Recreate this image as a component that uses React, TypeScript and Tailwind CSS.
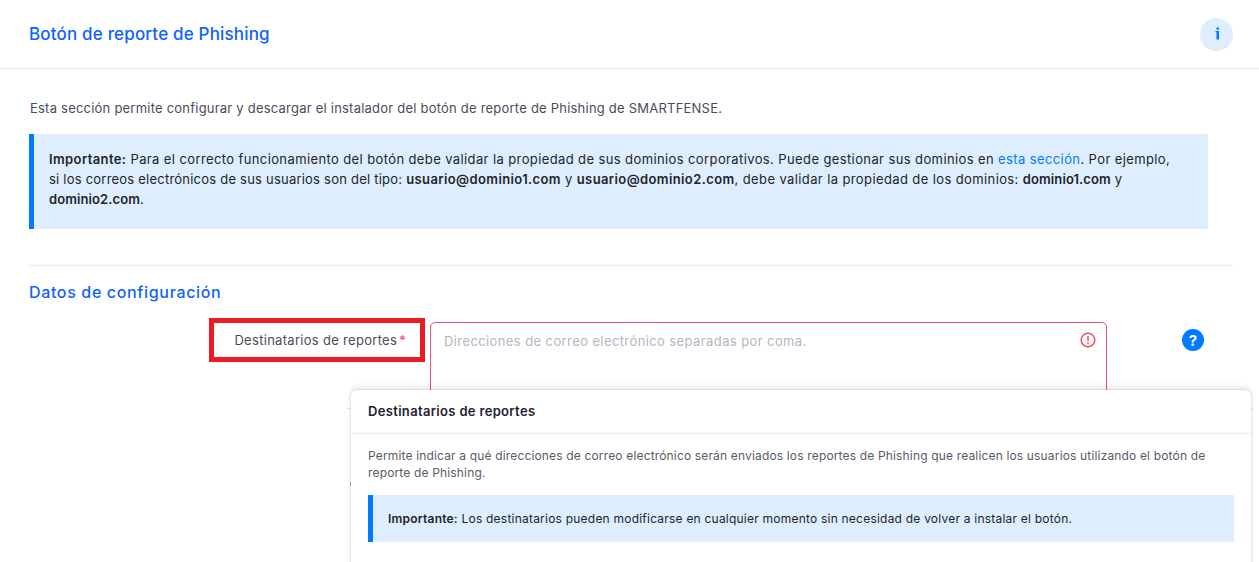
const font = { fontFamily: 'Inter, "Noto Sans", sans-serif' };

function Note({ className, children }: { className: string; children: React.ReactNode }) {
  return <div className={`bg-[#deeefe] border-l-[5px] border-[#007bff] text-[#212529] ${className}`}>{children}</div>;
}

export default function App() {
  return (
    <div className="relative h-[562px] w-[1259px] overflow-hidden bg-white text-[13px] text-[#4b4b5a]" style={font}>
      {/* Header */}
      <div className="flex h-[69px] items-center justify-between border-b border-[#ebebf3] pl-[29px] pr-[26px]">
        <h1 className="pt-[1px] text-[17px] font-medium tracking-[0.17px] text-[#0f62fe]">Botón de reporte de Phishing</h1>
        <div className="flex h-[33px] w-[33px] items-center justify-center rounded-full bg-[#deeefe]">
          <svg width="10" height="14" viewBox="0 0 10 14" fill="#007bff">
            <rect x="4.5" y="0.5" width="2.5" height="2.2" />
            <path d="M3.5 4h3.5v8.5h-2.5V5.2h-1z" />
          </svg>
        </div>
      </div>

      <div className="pl-[29px] pr-[26px]">
        <p className="mt-[30px] pl-[1px] leading-[18px] tracking-[0.22px]">
          Esta sección permite configurar y descargar el instalador del botón de reporte de Phishing de SMARTFENSE.
        </p>

        <Note className="mt-[17px] h-[95px] w-[1179px] pl-[15px] pt-[15px] leading-[20px] tracking-[0.39px]">
          <b className="font-semibold">Importante:</b> Para el correcto funcionamiento del botón debe validar la propiedad de sus dominios corporativos. Puede gestionar sus dominios en{' '}
          <span className="text-[#007bff]">esta sección</span>. Por ejemplo,<br />
          <span className="tracking-[0.22px]">si los correos electrónicos de sus usuarios son del tipo:</span> <b className="font-semibold">usuario@dominio1.com</b> y{' '}
          <b className="font-semibold">usuario@dominio2.com</b>, debe validar la propiedad de los dominios: <b className="font-semibold tracking-[0.1px]">dominio1.com</b> y<br />
          <b className="font-semibold tracking-[0.1px]">dominio2.com</b>.
        </Note>

        <div className="mt-[36px] border-t border-[#ebebf3] pt-[16px]">
          <h2 className="text-[16px] font-medium leading-[20px] tracking-[0.65px] text-[#0f62fe]">Datos de configuración</h2>
        </div>

        {/* Form row */}
        <div className="mt-[16px] flex items-start">
          <div className="ml-[180px] flex h-[44px] w-[216px] items-start justify-end border-[5px] border-[#ed1c24] pr-[14px] pt-[8px] leading-[18px] tracking-[0.3px]">
            Destinatarios de reportes<span className="ml-[2px] text-[#f1416c]">*</span>
          </div>
          <div className="relative ml-[5px] mt-[4px] h-[100px] w-[677px] rounded-[5px] border border-[#f4516c] py-[9px] pl-[13px] leading-[18px] tracking-[0.4px] text-[#b5b5c3]">
            Direcciones de correo electrónico separadas por coma.
            <svg className="absolute right-[10px] top-[9px]" width="16" height="16" viewBox="0 0 16 16" fill="none" stroke="#f4516c" strokeWidth="1.6">
              <circle cx="8" cy="8" r="6.8" />
              <path d="M8 4v5M8 10.6v1.6" />
            </svg>
          </div>
          <div className="ml-[75px] mt-[11px] flex h-[22px] w-[22px] items-center justify-center rounded-full bg-[#007bff] text-[15px] font-bold leading-none text-white">?</div>
        </div>
      </div>

      {/* Bits of the page that show beside the popover */}
      <div className="absolute left-[347px] top-[408px] h-px w-[906px] bg-[#e6e6e6]" />
      <div className="absolute left-[350px] top-[482px] h-[4px] w-px bg-[#e8a25a]" />

      {/* Help popover */}
      <div className="absolute left-[351px] top-[390px] h-[200px] w-[900px] rounded-[6px] bg-white shadow-[0_-4px_6px_rgba(0,0,0,0.07),0_0_3px_rgba(0,0,0,0.18)]">
        <div className="flex h-[44px] items-center border-b border-[#ebebeb] pl-[17px] text-[13px] font-semibold tracking-[0.33px] text-[#1f2233]">Destinatarios de reportes</div>
        <div className="px-[17px] pt-[13px] text-[12px] leading-[17px] tracking-[0.16px] text-[#5a5a6a]">
          Permite indicar a qué direcciones de correo electrónico serán enviados los reportes de Phishing que realicen los usuarios utilizando el botón de<br />reporte de Phishing.
        </div>
        <Note className="mx-[17px] mt-[14px] flex h-[47px] items-center pl-[15px] text-[12px] tracking-[0.22px]">
          <span><b className="font-semibold">Importante:</b> Los destinatarios pueden modificarse en cualquier momento sin necesidad de volver a instalar el botón.</span>
        </Note>
      </div>
    </div>
  );
}
